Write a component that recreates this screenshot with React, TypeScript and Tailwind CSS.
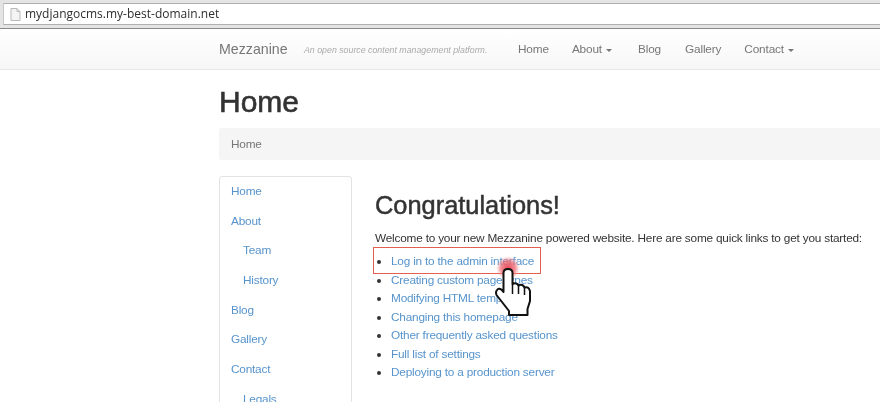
const font = "font-['Liberation_Sans',Arial,sans-serif]";

const sideLinks = [
  { label: "Home", sub: false },
  { label: "About", sub: false },
  { label: "Team", sub: true },
  { label: "History", sub: true },
  { label: "Blog", sub: false },
  { label: "Gallery", sub: false },
  { label: "Contact", sub: false },
  { label: "Legals", sub: true },
];

const quickLinks = [
  "Creating custom page types",
  "Modifying HTML templates",
  "Changing this homepage",
  "Other frequently asked questions",
  "Full list of settings",
  "Deploying to a production server",
];

function Caret() {
  return <span className="ml-[4px] inline-block border-x-[3.500px] border-t-[3.500px] border-x-transparent border-t-[#777] align-middle" />;
}

function HandCursor() {
  return (
    <svg width="45" height="65" viewBox="0 0 45 65" className="absolute left-[490px] top-[255px]">
      <defs>
        <radialGradient id="glow">
          <stop offset="0" stopColor="#e8404f" stopOpacity="0.95" />
          <stop offset="0.6" stopColor="#ee6a72" stopOpacity="0.75" />
          <stop offset="1" stopColor="#f4a0a4" stopOpacity="0" />
        </radialGradient>
      </defs>
      <circle cx="18" cy="13" r="12" fill="url(#glow)" />
      <path
        d="M13.500 18Q13.500 14 18 14Q22.500 14 22.500 18V29Q26.500 27 28.500 30.500Q32.500 28.500 34.500 32.500Q38.500 31 40 36V46L37.500 54V60H19V56L12 47L6.500 40Q5 36 8 34Q11 33 13.500 37Z"
        fill="#fff"
        stroke="#111"
        strokeWidth="2"
        strokeLinejoin="round"
      />
      <path d="M22.500 29V39M28.500 30.500V39M34.500 32.500V40" fill="none" stroke="#111" strokeWidth="1.500" />
    </svg>
  );
}

export default function App() {
  return (
    <div className={`relative h-[402px] w-[880px] overflow-hidden bg-white blur-[0.35px] ${font}`}>
      {/* browser address bar */}
      <div className="h-[29px] border-b border-[#8a8a8a] bg-[#e4e4e4] pt-[3px]">
        <div className="ml-[3px] flex h-[22px] items-center border-y border-l border-y-[#b0b0b0] border-l-[#c8c8c8] bg-white pl-[6px]">
          <svg width="11" height="13" viewBox="0 0 11 13" className="mr-[4px]">
            <path d="M1 .5h6l3 3v9H1z" fill="#f4f4f4" stroke="#b9b9b9" />
            <path d="M7 .5v3h3" fill="none" stroke="#b9b9b9" />
          </svg>
          <span className="font-['Open_Sans',sans-serif] text-[12px] leading-none font-medium text-[#2e2e2e]">mydjangocms.my-best-domain.net</span>
        </div>
      </div>

      {/* site navbar */}
      <div className="flex h-[41px] items-center border-b border-[#e8e8e8] bg-gradient-to-b from-white to-[#f7f7f7] pt-[2px] pl-[219px]">
        <span className="w-[69px] text-[14.200px] text-[#777]">Mezzanine</span>
        <span className="ml-[16px] w-[185px] pt-[1px] text-[8.800px] whitespace-nowrap text-[#aaa] italic">An open source content management platform.</span>
        <nav className="flex text-[11.800px] tracking-[-0.15px] text-[#777]">
          <span className="ml-[29px]">Home</span>
          <span className="ml-[23px]">About<Caret /></span>
          <span className="ml-[26px]">Blog</span>
          <span className="ml-[24px]">Gallery</span>
          <span className="ml-[23px]">Contact<Caret /></span>
        </nav>
      </div>

      <div className="pl-[219px]">
        <h1 className="mt-[14px] text-[30px] leading-[36px] text-[#333] [-webkit-text-stroke:0.6px_#333]">Home</h1>
        <div className="mt-[8px] h-[32px] rounded-l-[3px] bg-[#f5f5f5] pl-[12px] text-[11.800px] leading-[32px] tracking-[-0.2px] text-[#777]">Home</div>

        <div className="mt-[16px] flex">
          {/* side menu */}
          <div className="h-[300px] w-[133px] shrink-0 rounded-[3px] border border-[#e3e3e3] pt-[5px]">
            {sideLinks.map((link) => (
              <div key={link.label} className={`h-[29.700px] text-[11.800px] leading-[18px] tracking-[-0.2px] text-[#5794cc] ${link.sub ? "pl-[23px]" : "pl-[11px]"}`}>
                {link.label}
              </div>
            ))}
          </div>

          {/* main column */}
          <div className="pl-[23px]">
            <h2 className="mt-[14px] text-[25.400px] leading-[30px] whitespace-nowrap text-[#333] [-webkit-text-stroke:0.5px_#333]">Congratulations!</h2>
            <p className="mt-[9px] text-[11.800px] leading-[18px] tracking-[-0.2px] whitespace-nowrap text-[#333]">
              Welcome to your new Mezzanine powered website. Here are some quick links to get you started:
            </p>
            <ul className="mt-[5px] list-disc pl-[16px] text-[11.800px] leading-[18.500px] tracking-[-0.2px] text-[#5794cc] marker:text-[#333]">
              <li className="relative">
                Log in to the admin interface
                <span className="absolute top-[-5px] left-[-18px] h-[27px] w-[168px] border border-[#e2604f]" />
              </li>
              {quickLinks.map((label) => (
                <li key={label}>{label}</li>
              ))}
            </ul>
          </div>
        </div>
      </div>

      <HandCursor />
    </div>
  );
}
